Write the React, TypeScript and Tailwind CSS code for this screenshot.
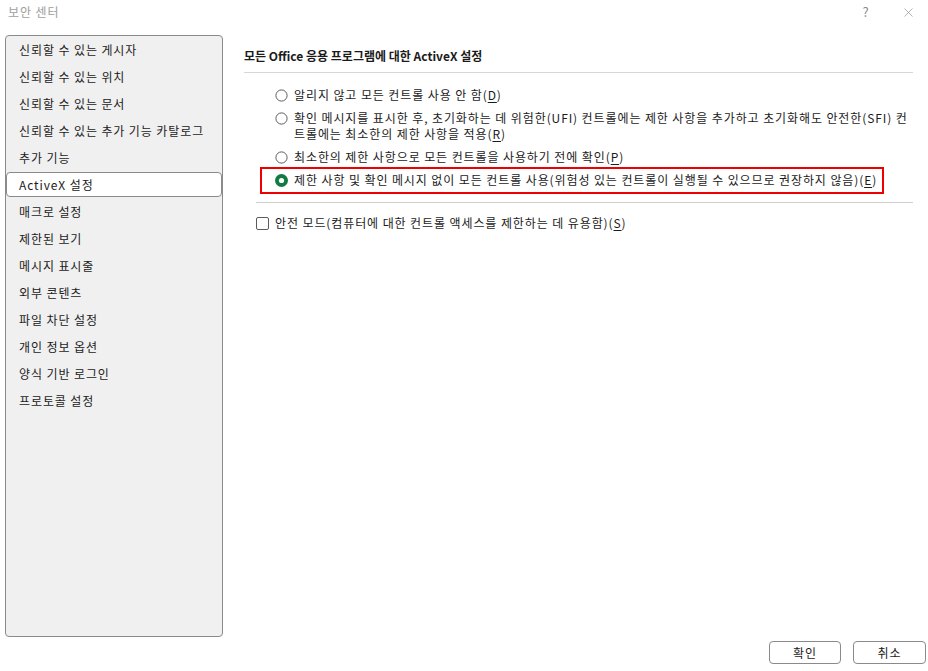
import React from "react";
import { X } from "lucide-react";

const navItems = [
    "신뢰할 수 있는 게시자",
    "신뢰할 수 있는 위치",
    "신뢰할 수 있는 문서",
    "신뢰할 수 있는 추가 기능 카탈로그",
    "추가 기능",
    "ActiveX 설정",
    "매크로 설정",
    "제한된 보기",
    "메시지 표시줄",
    "외부 콘텐츠",
    "파일 차단 설정",
    "개인 정보 옵션",
    "양식 기반 로그인",
    "프로토콜 설정",
];

function Radio({ checked }: { checked?: boolean }) {
    return (
        <svg width="13" height="13" viewBox="0 0 13 13" className="shrink-0">
            {checked ? (
                <>
                    <circle cx="6.5" cy="6.5" r="6.5" fill="#107c41" />
                    <circle cx="6.5" cy="6.5" r="2.6" fill="#ffffff" />
                </>
            ) : (
                <circle cx="6.5" cy="6.5" r="5.6" fill="#ffffff" stroke="#5c5c5c" strokeWidth="1" />
            )}
        </svg>
    );
}

function Key({ k }: { k: string }) {
    return (
        <span className="inline-block leading-[16px] align-top">
            (<u className="underline-offset-2">{k}</u>)
        </span>
    );
}

export default function App() {
    return (
        <div
            className="w-[928px] h-[671px] bg-white flex flex-col text-[12px] tracking-[0.9px] text-[#1b1b1b] overflow-hidden"
            style={{ fontFamily: '"Noto Sans CJK KR", "Noto Sans", sans-serif' }}
        >
            {/* title bar */}
            <div className="h-[24px] flex items-center pl-[8px] text-[#9e9e9e]">
                <span>보안 센터</span>
                <span className="ml-auto w-[14px] text-center text-[#8a8a8a] text-[13px]">?</span>
                <span className="ml-[28px] mr-[12px] flex items-center text-[#8a8a8a]">
                    <X size={15} strokeWidth={1} />
                </span>
            </div>

            <div className="flex pt-[11px]">
                {/* left nav */}
                <div className="ml-[5px] w-[218px] h-[602px] border border-[#8a8a8a] rounded-[4px] bg-[#f0f0f0] flex flex-col">
                    {navItems.map((item) =>
                        item === "ActiveX 설정" ? (
                            <div key={item} className="h-[27px] py-[1px]">
                                <div className="h-[25px] flex items-center pl-[12px] bg-white border border-[#8a8a8a] rounded-[4px]">
                                    {item}
                                </div>
                            </div>
                        ) : (
                            <div key={item} className="h-[27px] flex items-center pl-[13px]">
                                {item}
                            </div>
                        )
                    )}
                </div>

                {/* right content */}
                <div className="flex-1 pl-[21px] pr-[15px] pt-[12px]">
                    <div className="leading-[18px] font-semibold tracking-normal">모든 Office 응용 프로그램에 대한 ActiveX 설정</div>
                    <div className="mt-[7px] h-px bg-[#d6d6d6]" />

                    <div className="pl-[31px] mt-[14px] flex flex-col gap-[7px] leading-[16px]">
                        <div className="flex items-start gap-[6px]">
                            <span className="mt-[2px]"><Radio /></span>
                            <span>알리지 않고 모든 컨트롤 사용 안 함<Key k="D" /></span>
                        </div>
                        <div className="flex items-start gap-[6px]">
                            <span className="mt-[2px]"><Radio /></span>
                            <span>
                                확인 메시지를 표시한 후, 초기화하는 데 위험한(UFI) 컨트롤에는 제한 사항을 추가하고 초기화해도 안전한(SFI) 컨트롤에는 최소한의 제한 사항을 적용<Key k="R" />
                            </span>
                        </div>
                        <div className="flex items-start gap-[6px]">
                            <span className="mt-[2px]"><Radio /></span>
                            <span>최소한의 제한 사항으로 모든 컨트롤을 사용하기 전에 확인<Key k="P" /></span>
                        </div>
                        <div className="-mt-[5px] -ml-[15px] w-fit border-2 border-[#ee0000] pl-[13px] pr-[5px] pt-[3px] pb-[4px]">
                            <div className="flex items-start gap-[6px]">
                                <span className="mt-[2px]"><Radio checked /></span>
                                <span>
                                    제한 사항 및 확인 메시지 없이 모든 컨트롤 사용(위험성 있는 컨트롤이 실행될 수 있으므로 권장하지 않음)<Key k="E" />
                                </span>
                            </div>
                        </div>
                    </div>

                    <div className="ml-[12px] mt-[8px] h-px bg-[#cfcfcf]" />

                    <div className="ml-[12px] mt-[12px] flex items-center gap-[6px] leading-[16px]">
                        <span className="w-[13px] h-[13px] border border-[#5c5c5c] rounded-[2px] bg-white shrink-0" />
                        <span>안전 모드(컴퓨터에 대한 컨트롤 액세스를 제한하는 데 유용함)<Key k="S" /></span>
                    </div>
                </div>
            </div>

            {/* footer */}
            <div className="mt-[4px] flex justify-end gap-[12px] pr-[2px]">
                <button className="w-[72px] h-[23px] border border-[#8a8a8a] rounded-[4px] bg-white flex items-center justify-center">
                    확인
                </button>
                <button className="w-[73px] h-[23px] border border-[#8a8a8a] rounded-[4px] bg-white flex items-center justify-center">
                    취소
                </button>
            </div>
        </div>
    );
}
